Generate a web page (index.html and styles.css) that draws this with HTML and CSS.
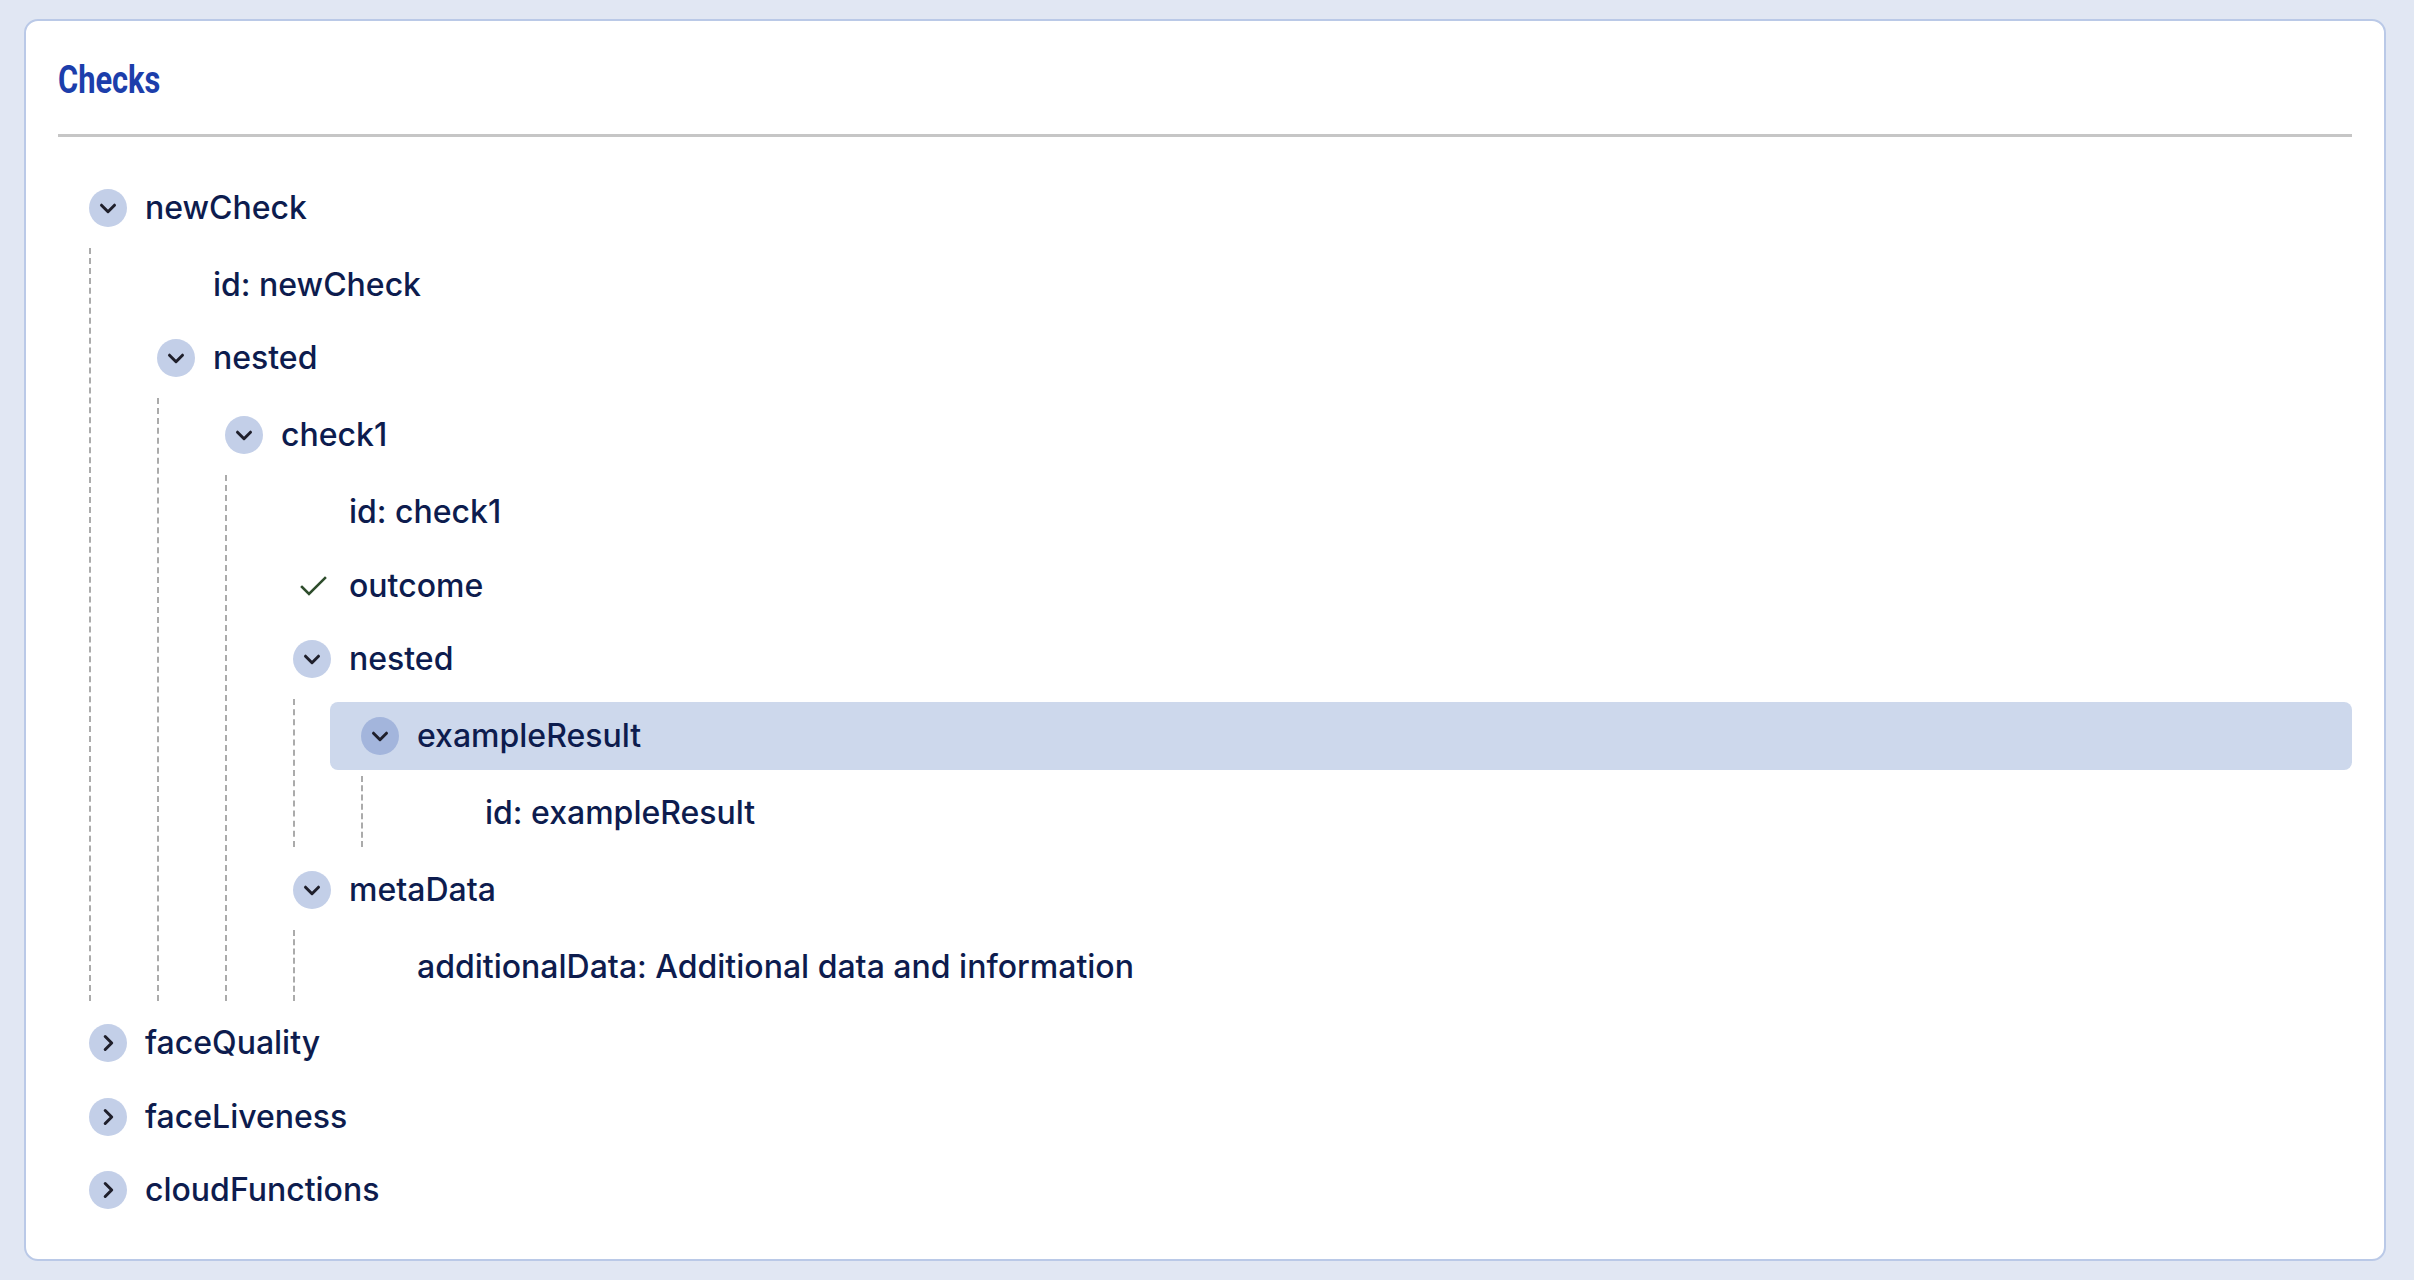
FILE: index.html
```html
<!DOCTYPE html>
<html lang="en">
<head>
<meta charset="utf-8">
<title>Checks</title>
<link rel="stylesheet" href="styles.css">
</head>
<body>
<div class="card">
  <h2 class="title"><span class="title-text">Checks</span></h2>
  <div class="sep"></div>
  <div class="tree">

    <div class="node">
      <div class="row">
        <span class="toggle"><svg viewBox="0 0 38 38" width="38" height="38"><polyline points="12.5,16.2 19,22.7 25.5,16.2"/></svg></span>
        <span class="label">newCheck</span>
      </div>
      <div class="children">
        <div class="node">
          <div class="row"><span class="slot"></span><span class="label">id: newCheck</span></div>
        </div>
        <div class="node">
          <div class="row">
            <span class="toggle"><svg viewBox="0 0 38 38" width="38" height="38"><polyline points="12.5,16.2 19,22.7 25.5,16.2"/></svg></span>
            <span class="label">nested</span>
          </div>
          <div class="children">
            <div class="node">
              <div class="row">
                <span class="toggle"><svg viewBox="0 0 38 38" width="38" height="38"><polyline points="12.5,16.2 19,22.7 25.5,16.2"/></svg></span>
                <span class="label">check1</span>
              </div>
              <div class="children">
                <div class="node">
                  <div class="row"><span class="slot"></span><span class="label">id: check1</span></div>
                </div>
                <div class="node">
                  <div class="row">
                    <span class="slot"><svg class="check" viewBox="0 0 38 38" width="38" height="38"><polyline points="9,20 16,27 32,11"/></svg></span>
                    <span class="label">outcome</span>
                  </div>
                </div>
                <div class="node">
                  <div class="row">
                    <span class="toggle"><svg viewBox="0 0 38 38" width="38" height="38"><polyline points="12.5,16.2 19,22.7 25.5,16.2"/></svg></span>
                    <span class="label">nested</span>
                  </div>
                  <div class="children">
                    <div class="node">
                      <div class="row selected">
                        <span class="toggle"><svg viewBox="0 0 38 38" width="38" height="38"><polyline points="12.5,16.2 19,22.7 25.5,16.2"/></svg></span>
                        <span class="label">exampleResult</span>
                      </div>
                      <div class="children">
                        <div class="node">
                          <div class="row"><span class="slot"></span><span class="label">id: exampleResult</span></div>
                        </div>
                      </div>
                    </div>
                  </div>
                </div>
                <div class="node">
                  <div class="row">
                    <span class="toggle"><svg viewBox="0 0 38 38" width="38" height="38"><polyline points="12.5,16.2 19,22.7 25.5,16.2"/></svg></span>
                    <span class="label">metaData</span>
                  </div>
                  <div class="children">
                    <div class="node">
                      <div class="row"><span class="slot"></span><span class="label">additionalData: Additional data and information</span></div>
                    </div>
                  </div>
                </div>
              </div>
            </div>
          </div>
        </div>
      </div>
    </div>

    <div class="node">
      <div class="row">
        <span class="toggle"><svg viewBox="0 0 38 38" width="38" height="38"><polyline points="16.2,12.5 22.7,19 16.2,25.5"/></svg></span>
        <span class="label">faceQuality</span>
      </div>
    </div>
    <div class="node">
      <div class="row">
        <span class="toggle"><svg viewBox="0 0 38 38" width="38" height="38"><polyline points="16.2,12.5 22.7,19 16.2,25.5"/></svg></span>
        <span class="label">faceLiveness</span>
      </div>
    </div>
    <div class="node">
      <div class="row">
        <span class="toggle"><svg viewBox="0 0 38 38" width="38" height="38"><polyline points="16.2,12.5 22.7,19 16.2,25.5"/></svg></span>
        <span class="label">cloudFunctions</span>
      </div>
    </div>

  </div>
</div>
</body>
</html>
```

FILE: styles.css
```css
html, body {
  margin: 0;
  padding: 0;
}

body {
  background: #e1e7f3;
  padding: 19px 0 0 24px;
  font-family: Inter, "Noto Sans", sans-serif;
  color: #0d1c4e;
}

.card {
  box-sizing: border-box;
  width: 2362px;
  height: 1242px;
  background: #ffffff;
  border: 2px solid #bac9e7;
  border-radius: 14px;
  padding: 39px 32px 0 32px;
}

.title {
  margin: 0;
  height: 40px;
  line-height: 40px;
  font-family: Roboto, "Liberation Sans", sans-serif;
  font-weight: 700;
  font-size: 39px;
  color: #1c3eab;
}

.title-text {
  display: inline-block;
  transform: scaleX(0.79);
  transform-origin: left center;
}

.sep {
  margin-top: 34px;
  height: 3px;
  background: #c6c6c6;
}

.tree {
  margin-top: 36.5px;
}

/* siblings are spaced with padding so that the collapsed
   bottom margin of nested child lists adds to it */
.node + .node {
  padding-top: 5.5px;
}

.children {
  margin-top: 6px;
  margin-bottom: 3px;
  margin-left: 31px;
  padding-top: 3px;
  padding-left: 35px;
  border-left: 2px dashed #ababab;
}

.row {
  display: flex;
  align-items: center;
  gap: 18px;
  height: 68px;
  padding-left: 31px;
  border-radius: 8px;
}

.row.selected {
  background: #cdd8ec;
}

.toggle,
.slot {
  flex: none;
  width: 38px;
  height: 38px;
  border-radius: 50%;
  display: flex;
}

.toggle {
  background: #c3cfe8;
}

.row.selected .toggle {
  background: #a3b5dc;
}

.toggle svg polyline {
  fill: none;
  stroke: #1f1f2b;
  stroke-width: 3;
  stroke-linecap: round;
  stroke-linejoin: round;
}

.check polyline {
  fill: none;
  stroke: #2e4d2c;
  stroke-width: 2.6;
  stroke-linecap: square;
  stroke-linejoin: miter;
}

.label {
  font-size: 32px;
  font-weight: 500;
  line-height: 38px;
  white-space: nowrap;
}
```
